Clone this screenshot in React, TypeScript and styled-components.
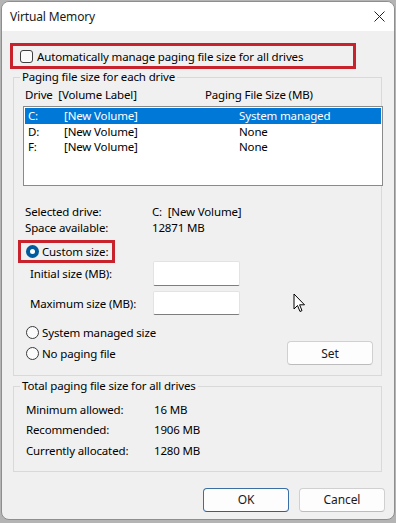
import React from "react";
import styled, { createGlobalStyle } from "styled-components";

const GlobalStyle = createGlobalStyle`
  html, body {
    margin: 0;
    padding: 0;
    background: #b4b4b4;
  }
  body {
    font-family: "Noto Sans", "Open Sans", sans-serif;
    font-size: 11.5px;
    letter-spacing: -0.15px;
    color: #000;
  }
`;

const Dialog = styled.div`
  position: relative;
  width: 394px;
  height: 519px;
  margin: 1px 0 0 1px;
  box-sizing: border-box;
  border: 1px solid #8e8e8e;
  border-radius: 8px;
  overflow: hidden;
  background: #f0f0f0;
  display: flex;
  flex-direction: column;
`;

const TitleBar = styled.div`
  height: 29px;
  flex: none;
  background: #ffffff;
  display: flex;
  align-items: center;
  justify-content: space-between;
  padding: 0 9px 0 8px;
`;

const Title = styled.span`
  font-size: 12px;
  color: #1a1a1a;
`;

const Body = styled.div`
  flex: 1;
  padding: 12px 12px 0 11px;
  display: flex;
  flex-direction: column;
`;

const Highlight = styled.div<{ $w: number; $h: number; $left: number }>`
  box-sizing: border-box;
  width: ${(p) => p.$w}px;
  height: ${(p) => p.$h}px;
  margin-left: ${(p) => p.$left}px;
  border: 3px solid #c8232c;
  display: flex;
  align-items: center;
`;

const CheckRow = styled.label`
  display: flex;
  align-items: center;
  gap: 4px;
  padding-left: 7px;
  white-space: nowrap;
`;

const CheckBox = styled.span`
  width: 11px;
  height: 11px;
  border: 1px solid #3f3f3f;
  border-radius: 3px;
  background: #fbfbfb;
  flex: none;
`;

const Group = styled.fieldset<{ $top: number; $bottom: number }>`
  margin: ${(p) => p.$top}px 0 0 0;
  padding: 0 0 ${(p) => p.$bottom}px 0;
  border: 1px solid #d9d9d9;
  min-width: 0;
`;

const Legend = styled.legend`
  margin-left: 6px;
  padding: 0 2px;
  line-height: 14px;
  white-space: nowrap;
`;

const HeaderRow = styled.div`
  display: flex;
  height: 14px;
  line-height: 14px;
  margin-top: 4px;
  padding-left: 11px;
  white-space: nowrap;
`;

const HeaderCell = styled.span<{ $w?: number }>`
  width: ${(p) => (p.$w ? `${p.$w}px` : "auto")};
  flex: none;
`;

const ListBox = styled.div`
  margin: 4px -2px 0 9px;
  height: 80px;
  box-sizing: border-box;
  border: 1px solid #8a8a8a;
  background: #ffffff;
  padding: 1px;
`;

const ListRow = styled.div<{ $selected?: boolean }>`
  display: flex;
  height: 15.5px;
  line-height: 15.5px;
  padding-left: 3px;
  background: ${(p) => (p.$selected ? "#0078d7" : "transparent")};
  color: ${(p) => (p.$selected ? "#ffffff" : "#000000")};
  white-space: nowrap;
`;

const Cell = styled.span<{ $w: number }>`
  width: ${(p) => p.$w}px;
  flex: none;
`;

const InfoList = styled.div<{ $top: number; $row: number; $left: number; $col: number }>`
  margin-top: ${(p) => p.$top}px;
  padding-left: ${(p) => p.$left}px;
  display: grid;
  grid-template-columns: ${(p) => p.$col}px auto;
  grid-auto-rows: ${(p) => p.$row}px;
  align-items: center;
  white-space: nowrap;
`;

const RadioRow = styled.label<{ $pad?: number }>`
  display: flex;
  align-items: center;
  gap: 3px;
  height: 16px;
  padding-left: ${(p) => p.$pad ?? 0}px;
  white-space: nowrap;
`;

const Radio = styled.span<{ $checked?: boolean }>`
  box-sizing: border-box;
  width: 13px;
  height: 13px;
  border-radius: 50%;
  flex: none;
  border: ${(p) => (p.$checked ? "none" : "1px solid #3a3a3a")};
  background: ${(p) => (p.$checked ? "#005a9e" : "#fbfbfb")};
  display: flex;
  align-items: center;
  justify-content: center;
  &::after {
    content: "";
    display: ${(p) => (p.$checked ? "block" : "none")};
    width: 5px;
    height: 5px;
    border-radius: 50%;
    background: #ffffff;
  }
`;

const CustomWrap = styled.div`
  margin-top: 5px;
  margin-left: 4px;
`;

const SizeRow = styled.div<{ $top: number; $h: number }>`
  display: flex;
  align-items: center;
  margin-top: ${(p) => p.$top}px;
  height: ${(p) => p.$h}px;
  padding-left: 16px;
  white-space: nowrap;
`;

const SizeLabel = styled.span`
  width: 123px;
  flex: none;
`;

const TextInput = styled.div`
  box-sizing: border-box;
  width: 87px;
  height: 100%;
  background: #ffffff;
  border: 1px solid #e3e3e3;
  border-bottom: 1px solid #7d7d7d;
  border-radius: 2px;
`;

const BottomArea = styled.div`
  display: flex;
  justify-content: space-between;
  align-items: flex-end;
  margin-top: 9px;
  padding: 0 8px 0 12px;
`;

const RadioColumn = styled.div`
  display: flex;
  flex-direction: column;
  gap: 5px;
  margin-bottom: 4px;
`;

const Button = styled.button<{ $w: number; $default?: boolean }>`
  box-sizing: border-box;
  width: ${(p) => p.$w}px;
  height: 24px;
  font-family: inherit;
  font-size: 12px;
  letter-spacing: -0.1px;
  color: #1a1a1a;
  background: #fdfdfd;
  border: 1px solid ${(p) => (p.$default ? "#3a6ea5" : "#d0d0d0")};
  border-bottom-color: ${(p) => (p.$default ? "#2f5f94" : "#bcbcbc")};
  border-radius: 4px;
  padding: 0;
`;

const Footer = styled.div`
  display: flex;
  justify-content: flex-end;
  gap: 10px;
  margin-top: 16px;
  margin-right: -3px;
`;

const Cursor = styled.svg`
  position: absolute;
  left: 291px;
  top: 291px;
`;

const drives = [
  { letter: "C:", label: "[New Volume]", size: "System managed", selected: true },
  { letter: "D:", label: "[New Volume]", size: "None" },
  { letter: "F:", label: "[New Volume]", size: "None" },
];

export default function App() {
  return (
    <>
      <GlobalStyle />
      <Dialog>
        <TitleBar>
          <Title>Virtual Memory</Title>
          <svg width="11" height="11" viewBox="0 0 11 11">
            <path d="M0.5 0.5 L10.5 10.5 M10.5 0.5 L0.5 10.5" stroke="#222" strokeWidth="1" />
          </svg>
        </TitleBar>
        <Body>
          <Highlight $w={346} $h={26} $left={-3}>
            <CheckRow>
              <CheckBox />
              Automatically manage paging file size for all drives
            </CheckRow>
          </Highlight>

          <Group $top={1} $bottom={10}>
            <Legend>Paging file size for each drive</Legend>
            <HeaderRow>
              <HeaderCell $w={180}>Drive&nbsp; [Volume Label]</HeaderCell>
              <HeaderCell>Paging File Size (MB)</HeaderCell>
            </HeaderRow>
            <ListBox>
              {drives.map((d) => (
                <ListRow key={d.letter} $selected={d.selected}>
                  <Cell $w={36}>{d.letter}</Cell>
                  <Cell $w={175}>{d.label}</Cell>
                  <Cell $w={120}>{d.size}</Cell>
                </ListRow>
              ))}
            </ListBox>

            <InfoList $top={17} $row={16} $left={11} $col={127}>
              <span>Selected drive:</span>
              <span>C:&nbsp; [New Volume]</span>
              <span>Space available:</span>
              <span>12871 MB</span>
            </InfoList>

            <CustomWrap>
              <Highlight $w={97} $h={23} $left={0}>
                <RadioRow $pad={5}>
                  <Radio $checked />
                  Custom size:
                </RadioRow>
              </Highlight>
            </CustomWrap>
            <SizeRow $top={-2} $h={25}>
              <SizeLabel>Initial size (MB):</SizeLabel>
              <TextInput />
            </SizeRow>
            <SizeRow $top={5} $h={24}>
              <SizeLabel>Maximum size (MB):</SizeLabel>
              <TextInput />
            </SizeRow>

            <BottomArea>
              <RadioColumn>
                <RadioRow>
                  <Radio />
                  System managed size
                </RadioRow>
                <RadioRow>
                  <Radio />
                  No paging file
                </RadioRow>
              </RadioColumn>
              <Button $w={86}>Set</Button>
            </BottomArea>
          </Group>

          <Group $top={3} $bottom={10}>
            <Legend>Total paging file size for all drives</Legend>
            <InfoList $top={6} $row={20.5} $left={12} $col={128}>
              <span>Minimum allowed:</span>
              <span>16 MB</span>
              <span>Recommended:</span>
              <span>1906 MB</span>
              <span>Currently allocated:</span>
              <span>1280 MB</span>
            </InfoList>
          </Group>

          <Footer>
            <Button $w={86} $default>
              OK
            </Button>
            <Button $w={86}>Cancel</Button>
          </Footer>
        </Body>
        <Cursor width="13" height="21" viewBox="0 0 13 21">
          <path
            d="M1 1 L1 16 L4.5 12.5 L7 18.5 L9 17.6 L6.6 11.8 L11.5 11.8 Z"
            fill="#ffffff"
            stroke="#000000"
            strokeWidth="1"
            strokeLinejoin="round"
          />
        </Cursor>
      </Dialog>
    </>
  );
}
